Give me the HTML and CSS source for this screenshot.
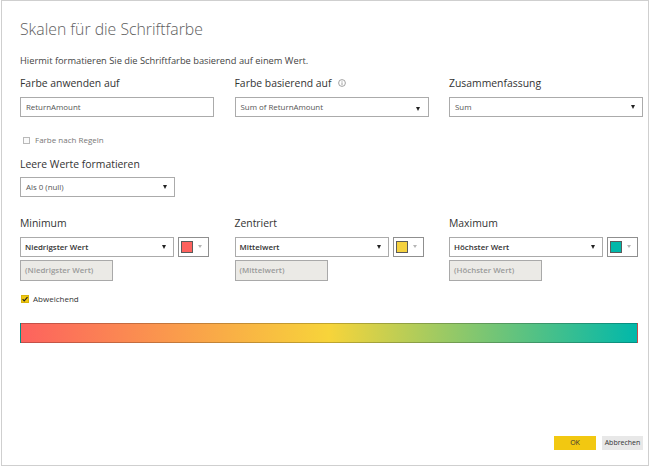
FILE: index.html
```html
<!DOCTYPE html>
<html lang="de">
<head>
<meta charset="utf-8">
<title>Skalen für die Schriftfarbe</title>
<link rel="stylesheet" href="styles.css">
</head>
<body>
<div class="dialog">
  <h1 class="title">Skalen für die Schriftfarbe</h1>
  <p class="subtitle">Hiermit formatieren Sie die Schriftfarbe basierend auf einem Wert.</p>

  <div class="grid grid-top">
    <div class="field">
      <div class="label">Farbe anwenden auf</div>
      <div class="input">ReturnAmount</div>
    </div>
    <div class="field">
      <div class="label">Farbe basierend auf
        <svg class="info" width="8" height="8" viewBox="0 0 8 8"><circle cx="4" cy="4" r="3.4" fill="none" stroke="#8a8a8a" stroke-width="0.8"/><rect x="3.6" y="1.9" width="0.8" height="0.8" fill="#8a8a8a"/><rect x="3.6" y="3.3" width="0.8" height="2.8" fill="#8a8a8a"/></svg>
      </div>
      <div class="input select caret-low">Sum of ReturnAmount<span class="caret"></span></div>
    </div>
    <div class="field">
      <div class="label">Zusammenfassung</div>
      <div class="input select">Sum<span class="caret"></span></div>
    </div>
  </div>

  <div class="check check-rules"><span class="box"></span><span>Farbe nach Regeln</span></div>

  <div class="label label-blank">Leere Werte formatieren</div>
  <div class="input select narrow">Als 0 (null)<span class="caret"></span></div>

  <div class="grid grid-scale">
    <div class="field">
      <div class="label">Minimum</div>
      <div class="pickrow">
        <div class="input select strong">Niedrigster Wert<span class="caret"></span></div>
        <div class="picker"><span class="swatch swatch-red"></span><span class="pcaret"></span></div>
      </div>
      <div class="input disabled">(Niedrigster Wert)</div>
    </div>
    <div class="field">
      <div class="label">Zentriert</div>
      <div class="pickrow">
        <div class="input select strong">Mittelwert<span class="caret"></span></div>
        <div class="picker"><span class="swatch swatch-yellow"></span><span class="pcaret"></span></div>
      </div>
      <div class="input disabled">(Mittelwert)</div>
    </div>
    <div class="field">
      <div class="label">Maximum</div>
      <div class="pickrow">
        <div class="input select strong">Höchster Wert<span class="caret"></span></div>
        <div class="picker"><span class="swatch swatch-teal"></span><span class="pcaret"></span></div>
      </div>
      <div class="input disabled">(Höchster Wert)</div>
    </div>
  </div>

  <div class="check check-diverge"><span class="box checked"><svg width="8" height="8" viewBox="0 0 8 8"><path d="M1.6 4.2 L3.2 5.8 L6.5 2.2" fill="none" stroke="#222" stroke-width="1.2"/></svg></span><span>Abweichend</span></div>

  <div class="gradient"></div>

  <div class="footer">
    <button class="btn btn-ok">OK</button>
    <button class="btn btn-cancel">Abbrechen</button>
  </div>
</div>
</body>
</html>
```

FILE: styles.css
```css
* { box-sizing: border-box; }

html, body {
  margin: 0;
  padding: 0;
  background: #ffffff;
}

body {
  font-family: "Open Sans", "Noto Sans", sans-serif;
  color: #333;
}

.dialog {
  margin-left: 1px;
  width: 648px;
  height: 466px;
  border: 1px solid #cfcfcf;
  padding: 18px 5px 15px 18px;
  display: flex;
  flex-direction: column;
  align-items: flex-start;
}

.title {
  margin: 0;
  font-size: 15.8px;
  font-weight: 300;
  line-height: 20px;
  color: #5e5e5e;
}

.subtitle {
  margin: 15px 0 0;
  font-size: 9.3px;
  line-height: 14px;
  color: #444;
}

.grid {
  display: grid;
  grid-template-columns: 194px 194px 194px;
  column-gap: 20.5px;
}

.grid-top { margin-top: 8px; }

.field {
  display: flex;
  flex-direction: column;
  align-items: flex-start;
}

.label {
  font-size: 10.4px;
  line-height: 14px;
  color: #333;
  margin-bottom: 7px;
  display: flex;
  align-items: center;
  white-space: nowrap;
}

.info { margin-left: 7px; margin-top: -1px; }

.input {
  position: relative;
  width: 194px;
  height: 20px;
  border: 1px solid #ababab;
  background: #fff;
  font-size: 7.9px;
  line-height: 18px;
  color: #555;
  padding-left: 5px;
  white-space: nowrap;
}

.select { padding-right: 14px; }

.caret {
  position: absolute;
  right: 7px;
  top: 7px;
  width: 0;
  height: 0;
  border-left: 2.5px solid transparent;
  border-right: 2.5px solid transparent;
  border-top: 4px solid #222;
}

.caret-low .caret { top: 9px; right: 8px; }

.check {
  display: flex;
  align-items: center;
  height: 12px;
  font-size: 8px;
  line-height: 12px;
}

.check .box {
  width: 7px;
  height: 7px;
  border: 1px solid #b9b9b9;
  background: #fafafa;
  margin: 0 5px 0 3px;
  flex: none;
}

.check-rules { margin-top: 17px; color: #777; }

.label-blank { margin-top: 11px; margin-bottom: 6px; }

.narrow { width: 155px; }

.grid-scale { margin-top: 19px; }

.pickrow {
  display: flex;
  gap: 4px;
}

.pickrow .input { width: 154px; }

.strong {
  font-weight: 600;
  color: #333;
  padding-left: 4px;
}

.picker {
  position: relative;
  width: 31px;
  height: 20px;
  border: 1px solid #8f8f8f;
  background: #fff;
  display: flex;
  align-items: center;
  padding-left: 2px;
}

.swatch {
  width: 12px;
  height: 12px;
  border: 1px solid #5b5b5b;
}

.swatch-red { background: #fd625e; }
.swatch-yellow { background: #f5d240; }
.swatch-teal { background: #01b8aa; }

.pcaret {
  position: absolute;
  right: 6px;
  top: 7px;
  width: 0;
  height: 0;
  border-left: 2.5px solid transparent;
  border-right: 2.5px solid transparent;
  border-top: 3px solid #b5b5b5;
}

.disabled {
  width: 93px;
  height: 21px;
  margin-top: 3px;
  background: #ebeae6;
  border-color: #a9a9a9;
  color: #9a9a9a;
  font-weight: 600;
  padding-left: 4px;
  line-height: 19px;
}

.check-diverge { margin-top: 12px; color: #333; }

.check-diverge .box.checked {
  width: 8px;
  height: 8px;
  border: 1px solid #d9b40a;
  background: #f2c811;
  margin: 0 4px 0 1px;
  display: flex;
  align-items: center;
  justify-content: center;
}

.check-diverge .box svg { display: block; flex: none; }

.gradient {
  margin-top: 18px;
  width: 618px;
  height: 20px;
  border: 1px solid rgba(0, 0, 0, 0.22);
  background: linear-gradient(to right, #fd625e 0%, #f7d43a 50%, #01b8aa 100%);
}

.footer {
  margin-top: auto;
  align-self: flex-end;
  display: flex;
  gap: 6px;
}

.btn {
  height: 14px;
  border: none;
  padding: 0;
  font-family: "Open Sans", "Noto Sans", sans-serif;
  font-size: 7px;
  line-height: 14px;
  color: #333;
  cursor: pointer;
}

.btn-ok { width: 42px; background: #f2c811; }
.btn-cancel { width: 41px; background: #e8e8e8; }
```
